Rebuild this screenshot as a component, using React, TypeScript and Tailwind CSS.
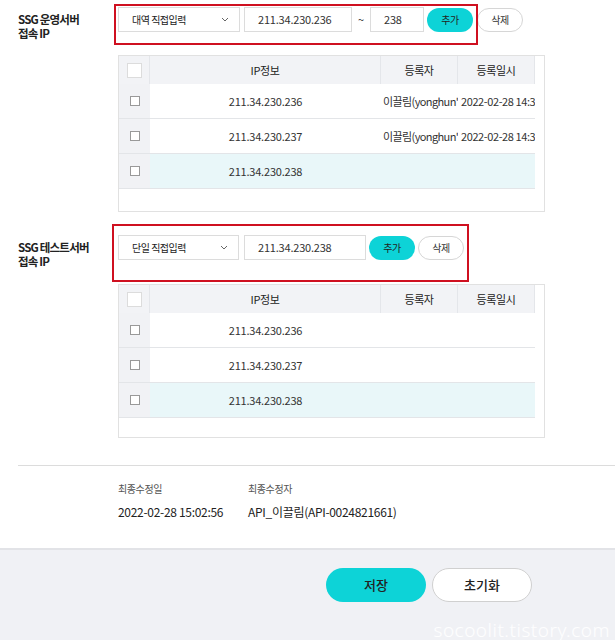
import React from 'react';

type Row = { ip: string; user?: string; date?: string; active?: boolean };

const rowsA: Row[] = [
  { ip: '211.34.230.236', user: "이끌림(yonghun'", date: '2022-02-28 14:32' },
  { ip: '211.34.230.237', user: "이끌림(yonghun'", date: '2022-02-28 14:32' },
  { ip: '211.34.230.238', active: true },
];

const rowsB: Row[] = [
  { ip: '211.34.230.236' },
  { ip: '211.34.230.237' },
  { ip: '211.34.230.238', active: true },
];

const Chevron = () => (
  <svg width="8" height="5" viewBox="0 0 8 5" fill="none">
    <path d="M1 1l3 3 3-3" stroke="#666" strokeWidth="1" />
  </svg>
);

const Select = ({ label, w }: { label: string; w: string }) => (
  <div className={`${w} h-[25px] border border-[#dcdcdc] bg-white flex items-center justify-between pl-[13px] pr-[10px] text-[10px] tracking-[-0.5px] text-[#222]`}>
    <span className="whitespace-pre">{label}</span>
    <Chevron />
  </div>
);

const Input = ({ value, w }: { value: string; w: string }) => (
  <div className={`${w} h-[25px] border border-[#dcdcdc] bg-white flex items-center pl-[13px] text-[11px] tracking-[-0.2px] text-[#333]`}>
    {value}
  </div>
);

const AddBtn = () => (
  <button className="w-[46px] h-[24px] rounded-full bg-[#0dd3d7] text-[10px] tracking-[-0.5px] text-[#222]">추가</button>
);

const DelBtn = () => (
  <button className="w-[46px] h-[24px] rounded-full border border-[#d6d6d6] bg-white text-[10px] tracking-[-0.5px] text-[#333]">삭제</button>
);

const IpTable = ({ rows, tail }: { rows: Row[]; tail: string }) => (
  <div className="w-[427px] border border-[#e1e1e1] bg-white pr-[9px]">
    <div className="flex h-[28px] bg-[#f2f3f6] text-[11px] tracking-[-0.4px] text-[#222]">
      <div className="w-[31px] flex items-center justify-center border-r border-[#e4e6ea]">
        <div className="w-[15px] h-[15px] border border-[#dcdcdc] bg-white" />
      </div>
      <div className="w-[231px] flex items-center justify-center border-r border-[#e4e6ea]">IP정보</div>
      <div className="w-[77px] flex items-center justify-center border-r border-[#e4e6ea]">등록자</div>
      <div className="w-[77px] flex items-center justify-center border-r border-[#e4e6ea]">등록일시</div>
    </div>
    {rows.map((r) => (
      <div
        key={r.ip}
        className={`flex h-[35px] border-b border-[#e3e5e8] text-[11px] tracking-[-0.2px] text-[#333] ${r.active ? 'bg-[#e9f7f9]' : 'bg-white'}`}
      >
        <div className="w-[31px] flex items-center justify-center bg-[#f1f2f5]">
          <div className="w-[10px] h-[10px] border border-[#999] bg-white" />
        </div>
        <div className="w-[231px] flex items-center justify-center">{r.ip}</div>
        <div className="w-[77px] overflow-hidden whitespace-nowrap text-center leading-[35px] pl-[2px] tracking-[-0.6px]">{r.user}</div>
        <div className="w-[77px] overflow-hidden whitespace-nowrap text-center leading-[35px] pl-[3px] tracking-[-0.4px]">{r.date}</div>
      </div>
    ))}
    <div className={tail} />
  </div>
);

export default function App() {
  return (
    <div className="relative w-[615px] h-[640px] overflow-hidden bg-white flex flex-col font-['Noto_Sans_CJK_KR','Noto_Sans',sans-serif] text-[#222]">
      <div className="pl-[18px] pt-[7px]">
        {/* 운영서버 */}
        <div className="flex">
          <div className="w-[100px] pt-[5px] text-[11.5px] font-bold leading-[14px] tracking-[-0.8px]">
            SSG 운영서버
            <br />
            접속 IP
          </div>
          <div>
            <div className="relative flex items-center h-[25px]">
              <Select label="대역 직접입력" w="w-[122px]" />
              <div className="w-[4px]" />
              <Input value="211.34.230.236" w="w-[108px]" />
              <span className="w-[18px] text-center text-[11px] text-[#333]">~</span>
              <Input value="238" w="w-[54px]" />
              <div className="w-[3px]" />
              <AddBtn />
              <div className="w-[4px]" />
              <DelBtn />
              <div className="absolute left-[-4px] top-[-3px] w-[364px] h-[41px] border-2 border-[#cf1020] pointer-events-none" />
            </div>
            <div className="mt-[23px]">
              <IpTable rows={rowsA} tail="h-[22px]" />
            </div>
          </div>
        </div>

        {/* 테스트서버 */}
        <div className="flex mt-[23px]">
          <div className="w-[100px] pt-[5px] text-[11.5px] font-bold leading-[14px] tracking-[-0.8px]">
            SSG 테스트서버
            <br />
            접속 IP
          </div>
          <div>
            <div className="relative flex items-center h-[25px]">
              <Select label="단일 직접입력" w="w-[121px]" />
              <div className="w-[5px]" />
              <Input value="211.34.230.238" w="w-[122px]" />
              <div className="w-[3px]" />
              <AddBtn />
              <div className="w-[3px]" />
              <DelBtn />
              <div className="absolute left-[-6px] top-[-11px] w-[357px] h-[58px] border-2 border-[#cf1020] pointer-events-none" />
            </div>
            <div className="mt-[24px]">
              <IpTable rows={rowsB} tail="h-[19px]" />
            </div>
          </div>
        </div>
      </div>

      <div className="ml-[18px] mt-[27px] border-t border-[#dcdcdc] pl-[100px] pt-[16px] pb-[28px]">
        <div className="flex text-[10px] leading-[14px] tracking-[-0.4px] text-[#555]">
          <div className="w-[130px]">최종수정일</div>
          <div>최종수정자</div>
        </div>
        <div className="flex mt-[8px] text-[12px] leading-[16px] tracking-[-0.3px] text-[#222]">
          <div className="w-[130px]">2022-02-28 15:02:56</div>
          <div>API_이끌림(API-0024821661)</div>
        </div>
      </div>

      <div className="flex-1 bg-[#f0f1f5] border-t-2 border-[#e2e3e7] flex justify-end items-start pt-[18px] pr-[83px] gap-[6px]">
        <button className="w-[100px] h-[34px] rounded-full bg-[#0dd3d7] text-[13px] font-medium text-[#222]">저장</button>
        <button className="w-[100px] h-[34px] rounded-full border border-[#d0d0d0] bg-white text-[13px] font-medium text-[#222]">초기화</button>
      </div>

      <div className="absolute right-[5px] bottom-[-4px] text-[19px] font-light text-white/90 font-['Noto_Sans',sans-serif] tracking-[0.5px]">
        socoolit.tistory.com
      </div>
    </div>
  );
}
